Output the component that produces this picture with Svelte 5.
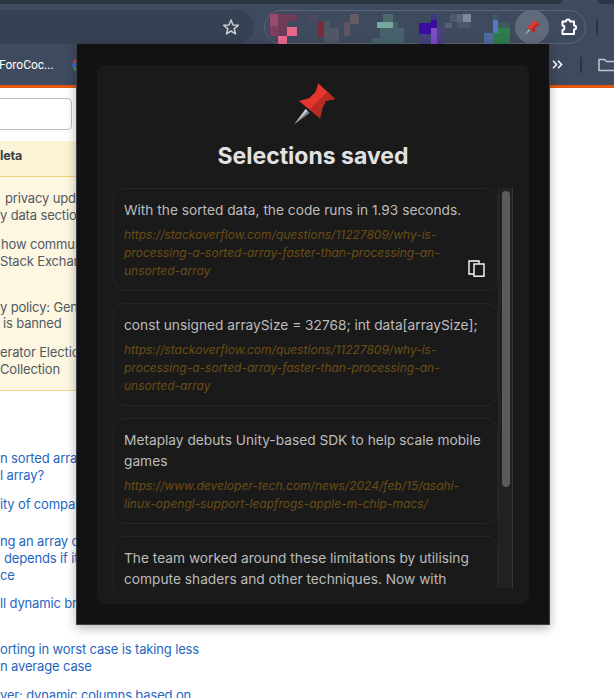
<script>
  const blocks = [
    [270,14,8,12,'#9a4a6c'],[270,26,8,10,'#7f3d60'],[278,14,19,7,'#6e3c58'],[278,21,9,15,'#6e3c58'],
    [287,27,10,9,'#e9658a'],[278,36,9,8,'#e8688d'],[307,14,11,8,'#4b4a60'],[318,22,6,15,'#7a2a3a'],
    [324,21,6,7,'#4c5466'],[324,28,15,16,'#505866'],[344,22,6,14,'#5e5560'],[350,14,9,10,'#665c66'],
    [383,14,10,8,'#4a6a6e'],[377,22,16,6,'#7aa89e'],[393,22,5,6,'#46606a'],[372,38,8,6,'#46616a'],
    [380,28,24,16,'#47626a'],[431,14,6,6,'#3c3a7a'],[419,23,18,11,'#3a0ca0'],[431,20,6,8,'#3a0ca0'],
    [431,28,6,16,'#7a4cc0'],[419,34,12,10,'#44407a'],[437,28,6,16,'#4a4080'],[450,14,7,8,'#4c596c'],
    [457,14,6,8,'#5a6678'],[463,14,8,8,'#7e8898'],[445,23,7,5,'#566274'],[457,22,14,6,'#4a5668'],
    [493,14,5,6,'#44546c'],[493,20,5,13,'#4f7ac8'],[484,33,9,11,'#4e6a9c'],[493,33,17,11,'#2e7a4c'],
    [498,28,12,5,'#2e8050'],[498,22,12,6,'#3e5a5c']
  ];
  const cards = [
    { text: 'With the sorted data, the code runs in 1.93 seconds.', url: 'https://stackoverflow.com/questions/11227809/why-is-processing-a-sorted-array-faster-than-processing-an-unsorted-array', copy: true },
    { text: 'const unsigned arraySize = 32768; int data[arraySize];', url: 'https://stackoverflow.com/questions/11227809/why-is-processing-a-sorted-array-faster-than-processing-an-unsorted-array' },
    { text: 'Metaplay debuts Unity-based SDK to help scale mobile games', url: 'https://www.developer-tech.com/news/2024/feb/15/asahi-linux-opengl-support-leapfrogs-apple-m-chip-macs/' },
    { text: 'The team worked around these limitations by utilising compute shaders and other techniques. Now with support for more', url: 'https://www.developer-tech.com/news/2024/feb/15/asahi-linux-opengl-support-leapfrogs-apple-m-chip-macs/' }
  ];
</script>

{#snippet pin(cls)}
  <svg class={cls} viewBox="0 0 44 44" aria-hidden="true">
    <path d="M1.3 42.3 L12.7 27 L16.7 31 Z" fill="#77848c"/>
    <path d="M1.3 42.3 L12.7 27 L14.7 29 Z" fill="#c5ced4"/>
    <path d="M25.3 1.3 L42 17 L32.7 19 L29.3 26.3 L27 36.3 L6 19 L16 16.3 L22.7 9.7 Z" fill="#e4352f"/>
    <path d="M34.7 9.7 L42 17 L32.7 19 L29.3 26.3 L27 36.3 L17 27 Z" fill="#b92a22"/>
  </svg>
{/snippet}

<div class="page">
  <header class="chrome">
    <div class="tabs"><span class="tab-a"></span><span class="tab-b"></span></div>
    <div class="toolbar">
      <div class="omnibox">
        <svg class="star" viewBox="0 0 18 18" aria-hidden="true">
          <path d="M9 2 L11 7 L16.3 7.3 L12.2 10.7 L13.5 15.9 L9 13 L4.5 15.9 L5.8 10.7 L1.7 7.3 L7 7 Z" fill="none" stroke="#c9ccd1" stroke-width="1.5" stroke-linejoin="round"/>
        </svg>
      </div>
      <div class="pill">
        <svg class="mosaic" viewBox="264 10 322 34" aria-hidden="true">
          {#each blocks as b}
            <rect x={b[0]} y={b[1]} width={b[2]} height={b[3]} fill={b[4]}/>
          {/each}
        </svg>
        <span class="pin-btn">{@render pin('pin-small')}</span>
        <svg class="puzzle" viewBox="0 0 18 18" aria-hidden="true">
          <path d="M2.5 3.5 H6 C6 0.8 10 0.8 10 3.5 H14 V7.5 C16.8 7.5 16.8 11.5 14 11.5 V16 H2.5 V12 C5 12 5 7.5 2.5 7.5 Z" fill="none" stroke="#fff" stroke-width="2" stroke-linejoin="round"/>
        </svg>
      </div>
      <span class="sep"></span>
    </div>
    <div class="bookmarks">
      <span class="bm-text">ForoCoc...</span>
      <svg class="gicon" viewBox="0 0 16 16" aria-hidden="true">
        <path d="M8 1 A7 7 0 0 0 2 5 L5.5 7 A3 3 0 0 1 8 5 Z" fill="#ea4335"/>
        <path d="M2 5 A7 7 0 0 0 2 11 L5.5 9 V7 Z" fill="#2f6fe0"/>
        <path d="M2 11 A7 7 0 0 0 8 15 V11 L5.5 9 Z" fill="#34a853"/>
        <path d="M8 1 H15 V6 H8 Z" fill="#fbbc05"/>
      </svg>
      <span class="bm-right">
        <svg class="chev" viewBox="0 0 11 9" aria-hidden="true"><path d="M1 0.8 L4.5 4.5 L1 8.2 M6 0.8 L9.5 4.5 L6 8.2" fill="none" stroke="#fff" stroke-width="1.6"/></svg>
        <span class="bm-sep"></span>
        <svg class="folder" viewBox="0 0 18 14" aria-hidden="true"><path d="M1 12.5 V1.5 H6.5 L8.5 3.5 H17 V12.5 Z" fill="none" stroke="#c3c7cd" stroke-width="1.5" stroke-linejoin="round"/></svg>
      </span>
    </div>
    <div class="orange"></div>
  </header>

  <main class="content">
    <div class="search"></div>
    <section class="meta">
      <h4>leta</h4>
      <ul>
        <li><span class="i5">privacy update</span><br>y data section</li>
        <li><span class="i1">how community</span><br>Stack Exchange<br>&nbsp;</li>
        <li>y policy: General<br><span class="i3">is banned</span></li>
        <li>erator Election<br>Collection</li>
      </ul>
    </section>
    <ul class="links">
      <li>n sorted array<br>l array?</li>
      <li class="wide">ity of comparing</li>
      <li>ng an array of<br><span class="i4">depends if it</span><br>ce</li>
      <li>ll dynamic branch<br>&nbsp;</li>
      <li class="over">orting in worst case is taking less<br>n average case</li>
      <li class="over">ver: dynamic columns based on</li>
    </ul>
  </main>

  <aside class="popup">
    <div class="panel">
      {@render pin('pin-large')}
      <h1>Selections saved</h1>
      <div class="scroller">
        <div class="list">
          {#each cards as c}
            <article class="card">
              <p class="text">{c.text}</p>
              <p class="url">{c.url}</p>
              {#if c.copy}
                <svg class="copy" viewBox="0 0 17 17" aria-hidden="true">
                  <path d="M5.5 14 H1 V1 H11 V3.5" fill="none" stroke="#fff" stroke-width="1.4"/>
                  <rect x="6" y="4" width="10" height="12.2" fill="none" stroke="#fff" stroke-width="1.4"/>
                </svg>
              {/if}
            </article>
          {/each}
        </div>
        <div class="track"><span class="thumb"></span></div>
      </div>
    </div>
  </aside>
</div>

<style>
  :global(body) { margin: 0; background: #fff; overflow: hidden; }
  * { box-sizing: border-box; }
  .page { position: relative; width: 614px; height: 698px; overflow: hidden; font-family: Inter, "Liberation Sans", sans-serif; }

  .chrome { background: #3e4a5d; }
  .tabs { display: flex; justify-content: space-between; height: 4px; background: #3e4a5d; }
  .tab-a { width: 562px; background: #2c3543; border-radius: 0 0 6px 0; }
  .tab-b { width: 16px; background: #2c3543; border-radius: 0 0 0 6px; }
  .toolbar { display: flex; align-items: flex-end; height: 40px; }
  .omnibox { width: 254px; height: 34px; background: #364153; border-radius: 0 17px 17px 0; display: flex; align-items: center; justify-content: flex-end; padding-right: 14px; }
  .star { width: 18px; height: 18px; }
  .pill { position: relative; margin-left: 10px; width: 322px; height: 34px; border: 1.5px solid #5a6577; border-radius: 17px; display: flex; align-items: center; justify-content: flex-end; padding-right: 7px; gap: 11px; }
  .mosaic { position: absolute; left: -1.5px; top: -1.5px; width: 322px; height: 34px; }
  .pin-btn { position: relative; width: 34px; height: 34px; border-radius: 50%; background: #5f6a7a; display: flex; align-items: center; justify-content: center; }
  .pin-small { width: 17px; height: 17px; }
  .puzzle { position: relative; width: 18px; height: 18px; }
  .sep { width: 2px; height: 16px; background: #2b3442; margin: 0 0 9px 10px; }

  .bookmarks { display: flex; align-items: center; height: 41px; color: #fff; font-size: 13px; }
  .bm-text { font-family: Roboto, sans-serif; font-size: 12px; margin-left: -1px; width: 72px; white-space: nowrap; }
  .gicon { width: 16px; height: 16px; }
  .bm-right { margin-left: auto; display: flex; align-items: center; margin-right: -2px; }
  .chev { width: 11px; height: 9px; }
  .bm-sep { width: 2px; height: 16px; background: #2b3442; margin: 0 16px 0 17px; }
  .folder { width: 18px; height: 14px; }
  .orange { height: 3px; background: #e0590d; }

  .content { font-size: 13px; line-height: 16.9px; letter-spacing: -0.15px; color: #525960; }
  .search { width: 72px; height: 32px; margin-top: 10px; background: #fff; border: 1px solid #babfc4; border-left: 0; border-radius: 0 5px 5px 0; }
  .meta { width: 100px; margin-top: 11px; background: #fdf7e2; border-bottom: 1px solid #f1d57e; height: 250px; }
  .meta h4 { margin: 0; height: 36px; background: #fbf3d5; border-bottom: 1px solid #f1d57e; color: #3b4045; font-size: 12.5px; font-weight: 700; line-height: 30px; }
  ul { list-style: none; margin: 0; padding: 0; white-space: nowrap; }
  .meta ul { padding-top: 13px; }
  .meta li { margin-bottom: 12px; }
  .i1 { margin-left: 1px; }
  .i3 { margin-left: 3px; }
  .i4 { margin-left: 4px; }
  .i5 { margin-left: 5px; }
  .links { margin-top: 59px; color: #1f66c1; }
  .links li { margin-bottom: 12px; }
  .links li.wide { margin-bottom: 20px; }

  .popup { position: absolute; left: 76px; top: 44px; width: 474px; height: 581px; background: #121214; border: 1px solid #3b3f48; border-top: 0; box-shadow: 0 3px 10px rgba(0,0,0,.3); padding: 21px 20px; }
  .panel { height: 539px; background: #1a1a1a; border-radius: 8px; padding: 17px 16px 16px; display: flex; flex-direction: column; align-items: center; }
  .pin-large { width: 44px; height: 44px; flex: none; margin-left: 4px; }
  h1 { margin: 14px 0 16px; height: 32px; font-size: 23px; line-height: 32px; font-weight: 700; color: #e1e1e1; flex: none; }
  .scroller { display: flex; width: 400px; height: 400px; flex: none; overflow: hidden; }
  .list { width: 385px; display: flex; flex-direction: column; gap: 12px; flex: none; }
  .card { position: relative; flex: none; border: 1px solid #262626; border-radius: 12px; padding: 11px 10px 10px; background: #1a1a1a; }
  .text { margin: 0; font-size: 13.72px; line-height: 21px; color: #bcbcbc; }
  .url { margin: 5px 0 0; font-size: 12px; line-height: 18px; font-style: italic; color: #6b4d14; overflow-wrap: anywhere; }
  .copy { position: absolute; right: 12px; bottom: 13px; width: 17px; height: 17px; }
  .track { width: 15px; background: #212121; border-left: 1px solid #262626; border-right: 1px solid #363636; padding: 3px 2px 0 3px; }
  .thumb { display: block; height: 296px; border-radius: 4px; background: #5b5b5b; }
</style>
